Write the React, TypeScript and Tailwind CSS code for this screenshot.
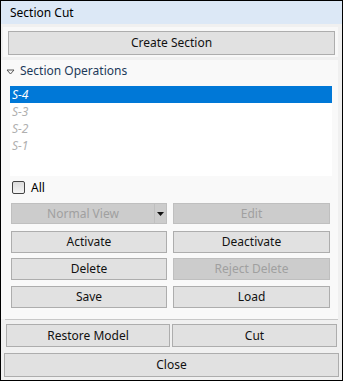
import type { ReactNode } from "react";

const font = { fontFamily: '"Noto Sans", "Open Sans", Arial, sans-serif' };

type BtnProps = {
  label: string;
  disabled?: boolean;
  className?: string;
};

function Btn({ label, disabled, className = "" }: BtnProps) {
  return (
    <button
      className={`flex items-center justify-center border text-[12px] leading-none ${
        disabled
          ? "border-[#bfbfbf] bg-[#cccccc] text-[#a0a0a0]"
          : "border-[#adadad] bg-[#e1e1e1] text-[#111]"
      } ${className}`}
    >
      {label}
    </button>
  );
}

function Row({ children, className = "" }: { children: ReactNode; className?: string }) {
  return <div className={`flex gap-[6px] ${className}`}>{children}</div>;
}

const sections = [
  { id: "S-4", selected: true },
  { id: "S-3", selected: false },
  { id: "S-2", selected: false },
  { id: "S-1", selected: false }
];

export default function App() {
  return (
    <div
      className="flex h-[381px] w-[343px] flex-col border border-black bg-[#f0f0f0] text-[12px] text-black"
      style={font}
    >
      {/* title */}
      <div className="flex h-[23px] items-center bg-[#dce8f6] pl-[9px]">Section Cut</div>

      {/* create section */}
      <div className="ml-[2px] mr-[4px] mt-[3px] h-[30px] bg-[#f8f8f8] pl-[5px] pr-[3px] pt-[4px]">
        <Btn label="Create Section" className="h-[24px] w-full" />
      </div>

      {/* section operations panel */}
      <div className="mr-[4px] mt-[3px] flex h-[259px] flex-col bg-[#f9f9f9]">
        <div className="flex h-[22px] items-center pl-[5px] text-[#1d3a5a]">
          <svg width="9" height="6" viewBox="0 0 9 6" className="mr-[5px] mt-[1px]">
            <path d="M1 1 L4.5 5 L8 1 Z" fill="none" stroke="#555" strokeWidth="1" />
          </svg>
          Section Operations
        </div>

        <div className="ml-[9px] mt-[4px] h-[90px] w-[322px] bg-white">
          {sections.map((s) => (
            <div
              key={s.id}
              className={`flex h-[17px] items-center pl-[2px] italic ${
                s.selected ? "bg-[#0078d7] text-white" : "text-[#b0b0b0]"
              }`}
            >
              {s.id}
            </div>
          ))}
        </div>

        <div className="ml-[11px] mt-[5px] flex h-[13px] items-center gap-[6px]">
          <div className="h-[13px] w-[13px] rounded-[2px] border border-[#444] bg-gradient-to-b from-[#dcdcdc] to-[#f4f4f4]" />
          <span>All</span>
        </div>

        <div className="ml-[10px] mt-[9px] flex w-[319px] flex-col">
          <Row>
            <div className="flex h-[21px] w-[156px] border border-[#bfbfbf] bg-[#cccccc] text-[#a0a0a0]">
              <div className="flex flex-1 items-center justify-center">Normal View</div>
              <div className="flex w-[12px] items-center justify-center border-l border-[#bfbfbf]">
                <svg width="7" height="4" viewBox="0 0 7 4">
                  <path d="M0 0 L7 0 L3.5 4 Z" fill="#111" />
                </svg>
              </div>
            </div>
            <Btn label="Edit" disabled className="h-[21px] flex-1" />
          </Row>
          <Row className="mt-[7px]">
            <Btn label="Activate" className="h-[22px] w-[156px]" />
            <Btn label="Deactivate" className="h-[22px] flex-1" />
          </Row>
          <Row className="mt-[5px]">
            <Btn label="Delete" className="h-[22px] w-[156px]" />
            <Btn label="Reject Delete" disabled className="h-[22px] flex-1" />
          </Row>
          <Row className="mt-[6px]">
            <Btn label="Save" className="h-[22px] w-[156px]" />
            <Btn label="Load" className="h-[22px] flex-1" />
          </Row>
        </div>
      </div>

      <div className="ml-[4px] mr-[4px] h-px bg-[#c8c8c8]" />

      {/* bottom */}
      <div className="flex flex-col px-[3px] pt-[4px]">
        <div className="flex gap-[2px] pl-[2px] pr-[2px]">
          <Btn label="Restore Model" className="h-[23px] w-[164px]" />
          <Btn label="Cut" className="h-[23px] flex-1" />
        </div>
        <Btn label="Close" className="mt-[6px] h-[24px] w-full" />
      </div>
    </div>
  );
}
